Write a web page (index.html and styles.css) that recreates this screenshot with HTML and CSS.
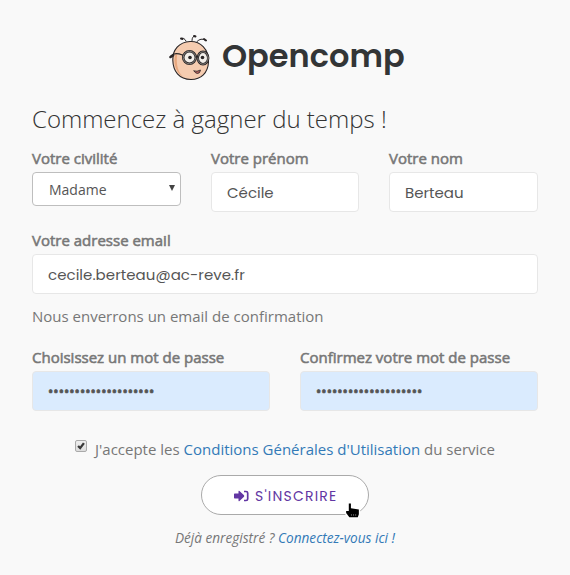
FILE: index.html
```html
<!DOCTYPE html>
<html lang="fr">
<head>
<meta charset="utf-8">
<title>Opencomp</title>
<link rel="stylesheet" href="styles.css">
</head>
<body>
<main class="page">
  <header class="brand">
    <svg class="face" viewBox="0 0 44 48" fill="none" stroke="#292526" stroke-linecap="round">
      <path d="M21 6.500C31 6 40 14 39.500 27C39 38 32 44.500 22 44.500C10 44.500 4 36 3.800 25C3.500 15 10 7 21 6.500Z" fill="#f5ccb0" stroke-width="1.100"/>
      <path d="M7 18C3 27 7 39 15 42C9 39 7 29 8 20Z" fill="#e7a77e" stroke="none"/>
      <path d="M17 6Q15 2 12 3.500M23 5.500Q23 1 26 1M28 6.500Q32 2.500 36 5" stroke-width="1"/>
      <path d="M12 3.500L13.500 4M25 1L26.500 1.500M35 4L37 5.500" stroke-width="1.900"/>
      <path d="M2 21Q5 17 13.500 20" stroke-width="1.300"/><path d="M1.500 22L4 20.500" stroke-width="2.600"/>
      <circle cx="20.500" cy="22.500" r="6.300" fill="#f2eee9" stroke-width="2.500"/>
      <circle cx="20.500" cy="22.500" r="6.300" stroke="#85807c" stroke-width="1"/>
      <ellipse cx="34" cy="23" rx="5.200" ry="6.200" fill="#f2eee9" stroke-width="2.400"/>
      <ellipse cx="34" cy="23" rx="5.200" ry="6.200" stroke="#85807c" stroke-width="1"/>
      <path d="M27 22Q28 21 29 22" stroke-width="1.600"/>
      <circle cx="21" cy="22.500" r="1.800" fill="#292526" stroke="none"/><circle cx="33.500" cy="22.500" r="1.800" fill="#292526" stroke="none"/>
      <path d="M25 36Q28 37 31.500 35Q31 38.500 28.500 38.500Q26.500 38.500 25 36Z" fill="#b5605c" stroke-width=".8"/>
    </svg>
    <span class="brand-name">Opencomp</span>
  </header>
  <h1 class="title">Commencez à gagner du temps !</h1>
  <form class="form">
    <div class="row row-names">
      <div class="field"><label class="label">Votre civilité</label>
        <div class="control select"><span>Madame</span><svg class="arrow" viewBox="0 0 6 6"><path d="M0 0H6L3 6Z" fill="#444"/></svg></div></div>
      <div class="field"><label class="label">Votre prénom</label><div class="control first-name">Cécile</div></div>
      <div class="field"><label class="label">Votre nom</label><div class="control last-name">Berteau</div></div>
    </div>
    <div class="field field-email"><label class="label">Votre adresse email</label>
      <div class="control email">cecile.berteau@ac-reve.fr</div></div>
    <p class="help">Nous enverrons un email de confirmation</p>
    <div class="row row-passwords">
      <div class="field"><label class="label">Choisissez un mot de passe</label><div class="control password">••••••••••••••••••••</div></div>
      <div class="field"><label class="label">Confirmez votre mot de passe</label><div class="control password">••••••••••••••••••••</div></div>
    </div>
    <div class="terms">
      <span class="check"><svg viewBox="0 0 12 12"><path d="M2.500 6L5 8.500L9.500 2.500" fill="none" stroke="#383838" stroke-width="2.800"/></svg></span>
      <span class="terms-text">J'accepte les <a>Conditions Générales d'Utilisation</a> du service</span>
    </div>
    <div class="submit">
      <svg class="login-icon" viewBox="0 0 15 12"><path d="M0 4.200Q0 3.500 .7 3.500H4.500V1.500Q4.500 .3 5.500 1L10 5.300Q10.500 6 10 6.700L5.500 11Q4.500 11.700 4.500 10.500V8.500H.7Q0 8.500 0 7.800Z" fill="#6236a3"/><path d="M10 1.500H12Q13.700 1.500 13.700 3V9Q13.700 10.500 12 10.500H10" fill="none" stroke="#6236a3" stroke-width="1.700"/></svg>
      <span class="submit-text">S'INSCRIRE</span>
      <svg class="cursor" viewBox="0 0 16 17"><path d="M4.500 1.500H6.500V6L14 7V11.500L13 14.500H5L2 10.500V8.500H4.500Z" fill="#000" stroke="#fff" stroke-width="2.600" stroke-linejoin="round" paint-order="stroke"/><path d="M7 11.500V13M9 11.500V13M11 11.500V13" stroke="#888" stroke-width=".7"/></svg>
    </div>
  </form>
  <p class="signin">Déjà enregistré ? <a>Connectez-vous ici !</a></p>
</main>
</body>
</html>
```
FILE: styles.css
```css
* { box-sizing: border-box; }
body { margin: 0; background: #f9f9f9; color: #777; font: 15px/20px "Open Sans", sans-serif; }
.page { padding: 35px 32px 0; height: 575px; overflow: hidden; }
.brand { display: flex; height: 48px; padding-left: 137px; }
.face { width: 44px; height: 48px; }
.brand-name { margin-left: 9px; font: 600 32px/41px Poppins, Inter, sans-serif; color: #333536; white-space: nowrap; }
.title { margin: 18px 0 0; font-size: 24px; line-height: 36px; font-weight: 300; color: #333; white-space: nowrap; }
.row { display: grid; }
.row-names { grid-template-columns: 149px 148px 149px; column-gap: 30px; margin-top: 11px; }
.row-passwords { grid-template-columns: 238px 238px; column-gap: 30px; margin-top: 20px; }
.field { display: flex; flex-direction: column; }
.field-email { margin-top: 18px; }
.label { height: 24px; line-height: 21px; -webkit-text-stroke: .55px #777; white-space: nowrap; }
.control { display: flex; align-items: center; height: 40px; padding: 1px 15px 0; border: 1px solid #e7e7e7; border-radius: 4px; background: #fff; color: #555; font-family: Poppins, Inter, sans-serif; white-space: nowrap; }
.email { letter-spacing: .04px; }
.select { height: 34px; padding: 1px 5px 0 16px; justify-content: space-between; border-color: #bebebe; font: 14px/20px "Open Sans", sans-serif; }
.arrow { width: 6px; height: 6px; margin-top: -3px; }
.password { background: #daebfe; font-family: "Open Sans", sans-serif; font-size: 14px; letter-spacing: .05px; -webkit-text-stroke: .7px #555; }
.help { margin: 12px 0 0; line-height: 21px; }
.terms { display: flex; align-items: flex-start; height: 24px; margin: 28px 0 0 43px; white-space: nowrap; }
.check { width: 12px; height: 12px; margin: 1px 8px 0 0; border: 1px solid #aaa; border-radius: 2px; background: linear-gradient(#eee, #ddd); }
.check svg { display: block; width: 10px; height: 10px; }
a { color: #337ab7; }
.submit { position: relative; display: flex; align-items: center; width: 168px; height: 40px; margin: 12px auto 0 169px; padding: 2px 0 0 32px; border: 1px solid #aaa; border-radius: 20px; background: #fff; color: #6236a3; }
.login-icon { width: 15px; height: 12px; margin-right: 6px; }
.submit-text { font: 14px/20px Poppins, Inter, sans-serif; letter-spacing: 1.2px; white-space: nowrap; }
.cursor { position: absolute; left: 142px; top: 26px; width: 17px; height: 18px; }
.signin { margin: 13px 0 0; text-align: center; font-size: 13.6px; font-style: italic; }
```
